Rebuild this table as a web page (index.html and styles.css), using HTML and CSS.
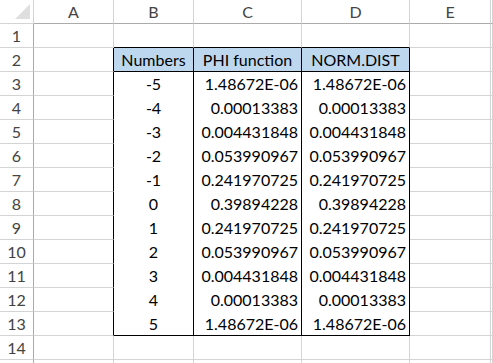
FILE: index.html
```html
<!DOCTYPE html>
<html lang="en">
<head>
  <meta charset="UTF-8">
  <title>PHI function vs NORM.DIST</title>
  <link rel="stylesheet" href="styles.css">
</head>
<body>
  <div class="sheet">
    <!-- column headers -->
    <div class="corner"><svg width="33" height="23" viewBox="0 0 33 23"><polygon points="30,4 30,19 15,19" fill="#dfdfdf"/></svg></div>
    <div class="col-head">A</div>
    <div class="col-head">B</div>
    <div class="col-head">C</div>
    <div class="col-head">D</div>
    <div class="col-head">E</div>
    <div class="col-head"></div>

    <!-- row 1 -->
    <div class="row-head">1</div>
    <div class="cell"></div>
    <div class="cell edge-b"></div>
    <div class="cell edge-b"></div>
    <div class="cell edge-b"></div>
    <div class="cell"></div>
    <div class="cell"></div>

    <!-- row 2: table header -->
    <div class="row-head">2</div>
    <div class="cell edge-r"></div>
    <div class="cell th">Numbers</div>
    <div class="cell th">PHI function</div>
    <div class="cell th">NORM.DIST</div>
    <div class="cell"></div>
    <div class="cell"></div>

    <div class="row-head">3</div>
    <div class="cell edge-r"></div>
    <div class="cell td center">-5</div>
    <div class="cell td num">1.48672E-06</div>
    <div class="cell td num">1.48672E-06</div>
    <div class="cell"></div>
    <div class="cell"></div>

    <div class="row-head">4</div>
    <div class="cell edge-r"></div>
    <div class="cell td center">-4</div>
    <div class="cell td num">0.00013383</div>
    <div class="cell td num">0.00013383</div>
    <div class="cell"></div>
    <div class="cell"></div>

    <div class="row-head">5</div>
    <div class="cell edge-r"></div>
    <div class="cell td center">-3</div>
    <div class="cell td num">0.004431848</div>
    <div class="cell td num">0.004431848</div>
    <div class="cell"></div>
    <div class="cell"></div>

    <div class="row-head">6</div>
    <div class="cell edge-r"></div>
    <div class="cell td center">-2</div>
    <div class="cell td num">0.053990967</div>
    <div class="cell td num">0.053990967</div>
    <div class="cell"></div>
    <div class="cell"></div>

    <div class="row-head">7</div>
    <div class="cell edge-r"></div>
    <div class="cell td center">-1</div>
    <div class="cell td num">0.241970725</div>
    <div class="cell td num">0.241970725</div>
    <div class="cell"></div>
    <div class="cell"></div>

    <div class="row-head">8</div>
    <div class="cell edge-r"></div>
    <div class="cell td center">0</div>
    <div class="cell td num">0.39894228</div>
    <div class="cell td num">0.39894228</div>
    <div class="cell"></div>
    <div class="cell"></div>

    <div class="row-head">9</div>
    <div class="cell edge-r"></div>
    <div class="cell td center">1</div>
    <div class="cell td num">0.241970725</div>
    <div class="cell td num">0.241970725</div>
    <div class="cell"></div>
    <div class="cell"></div>

    <div class="row-head">10</div>
    <div class="cell edge-r"></div>
    <div class="cell td center">2</div>
    <div class="cell td num">0.053990967</div>
    <div class="cell td num">0.053990967</div>
    <div class="cell"></div>
    <div class="cell"></div>

    <div class="row-head">11</div>
    <div class="cell edge-r"></div>
    <div class="cell td center">3</div>
    <div class="cell td num">0.004431848</div>
    <div class="cell td num">0.004431848</div>
    <div class="cell"></div>
    <div class="cell"></div>

    <div class="row-head">12</div>
    <div class="cell edge-r"></div>
    <div class="cell td center">4</div>
    <div class="cell td num">0.00013383</div>
    <div class="cell td num">0.00013383</div>
    <div class="cell"></div>
    <div class="cell"></div>

    <div class="row-head">13</div>
    <div class="cell edge-r"></div>
    <div class="cell td end center">5</div>
    <div class="cell td end num">1.48672E-06</div>
    <div class="cell td end num">1.48672E-06</div>
    <div class="cell"></div>
    <div class="cell"></div>

    <div class="row-head">14</div>
    <div class="cell"></div>
    <div class="cell"></div>
    <div class="cell"></div>
    <div class="cell"></div>
    <div class="cell"></div>
    <div class="cell"></div>

    <!-- row 15 only peeks in at the bottom edge -->
    <div class="row-head"></div>
    <div class="cell"></div>
    <div class="cell"></div>
    <div class="cell"></div>
    <div class="cell"></div>
    <div class="cell"></div>
    <div class="cell"></div>
  </div>
</body>
</html>
```

FILE: styles.css
```css
body {
  margin: 0;
  background-color: #fff;
  font-family: Lato, 'Open Sans', sans-serif;
  font-size: 16px;
  color: #000;
  overflow: hidden;
}
.sheet {
  display: grid;
  grid-template-columns: 34px 80px 80px 108px 108px 81px 1fr;
  grid-auto-rows: 24px;
}
.sheet > div {
  box-sizing: border-box;
  line-height: 23px;
  white-space: nowrap;
  overflow: hidden;
}
.corner {
  border-right: 1px solid #d4d4d4;
  border-bottom: 1px solid #d4d4d4;
}
.corner svg {
  display: block;
}
.col-head {
  text-align: center;
  color: #444;
  border-right: 1px solid #d4d4d4;
  border-bottom: 1px solid #ababab;
}
.row-head {
  text-align: center;
  color: #444;
  border-right: 1px solid #ababab;
  border-bottom: 1px solid #d4d4d4;
}
.cell {
  border-right: 1px solid #d4d4d4;
  border-bottom: 1px solid #d4d4d4;
}
.edge-b {
  border-bottom-color: #000;
}
.edge-r {
  border-right-color: #000;
}
.th {
  text-align: center;
  background-color: #bdd7ee;
  border-right-color: #000;
  border-bottom-color: #000;
}
.td {
  border-right-color: #000;
  border-bottom-width: 0;
}
.td.end {
  border-bottom: 1px solid #000;
}
.center {
  text-align: center;
}
.num {
  text-align: right;
  padding-right: 3px;
}
```
